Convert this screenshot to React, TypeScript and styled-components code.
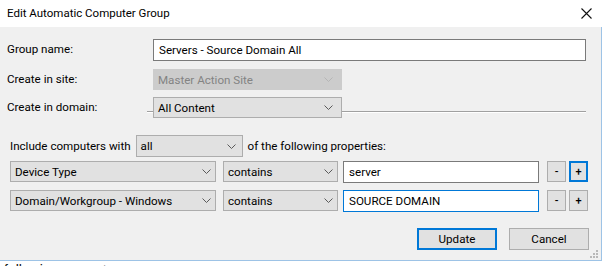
import styled, { createGlobalStyle } from 'styled-components';

// Edit Automatic Computer Group dialog

const GlobalStyle = createGlobalStyle`
  html, body {
    margin: 0;
    padding: 0;
    background: #ffffff;
  }
  body {
    font-family: Roboto, 'Noto Sans', sans-serif;
    font-size: 11.6px;
    color: #000;
  }
`;

const Chevron = ({ muted }: { muted?: boolean }) => (
  <svg width="9" height="5" viewBox="0 0 9 5">
    <polyline
      points="0.5,0.5 4.5,4.5 8.5,0.5"
      fill="none"
      stroke={muted ? '#b5b5b5' : '#5a5a5a'}
      strokeWidth="1"
    />
  </svg>
);

const CloseIcon = () => (
  <svg width="11" height="11" viewBox="0 0 11 11">
    <path d="M0.5 0.5 L10.5 10.5 M10.5 0.5 L0.5 10.5" stroke="#111" strokeWidth="1.1" />
  </svg>
);

const Select = ({
  value,
  width,
  disabled,
  chevronRight = 8,
}: {
  value: string;
  width: number;
  disabled?: boolean;
  chevronRight?: number;
}) => (
  <SelectBox $width={width} $disabled={disabled} $chevronRight={chevronRight}>
    <span>{value}</span>
    <Chevron muted={disabled} />
  </SelectBox>
);

export default function App() {
  return (
    <>
      <GlobalStyle />
      <Window>
        <TitleBar>
          <Title>Edit Automatic Computer Group</Title>
          <CloseButton>
            <CloseIcon />
          </CloseButton>
        </TitleBar>

        <Body>
          <FieldRow $top={12}>
            <Label>Group name:</Label>
            <TextInput $width={433}>Servers - Source Domain All</TextInput>
          </FieldRow>

          <FieldRow $top={8}>
            <Label>Create in site:</Label>
            <Select value="Master Action Site" width={189} disabled chevronRight={12} />
          </FieldRow>

          <FieldRow $top={7}>
            <Label $width={140}>Create in domain:</Label>
            <Rule $width={6} />
            <Select value="All Content" width={189} chevronRight={12} />
            <Rule />
          </FieldRow>

          <Criteria>
            <IncludeRow>
              <span>Include computers with</span>
              <Select value="all" width={107} chevronRight={10} />
              <span>of the following properties:</span>
            </IncludeRow>

            <PropertyRow $top={4}>
              <Select value="Device Type" width={206} />
              <Select value="contains" width={115} />
              <TextInput $width={196}>server</TextInput>
              <SmallButtons>
                <SmallButton>-</SmallButton>
                <SmallButton $focused>+</SmallButton>
              </SmallButtons>
            </PropertyRow>

            <PropertyRow $top={7}>
              <Select value="Domain/Workgroup - Windows" width={206} />
              <Select value="contains" width={115} />
              <TextInput $width={196} $focused>SOURCE DOMAIN</TextInput>
              <SmallButtons>
                <SmallButton>-</SmallButton>
                <SmallButton>+</SmallButton>
              </SmallButtons>
            </PropertyRow>
          </Criteria>

          <Actions>
            <ActionButton $primary>Update</ActionButton>
            <ActionButton>Cancel</ActionButton>
          </Actions>

          <Grip>
            <svg width="8" height="8" viewBox="0 0 8 8">
              {[
                [6, 0],
                [6, 3],
                [3, 3],
                [6, 6],
                [3, 6],
                [0, 6],
              ].map(([x, y]) => (
                <rect key={`${x}-${y}`} x={x} y={y} width="2" height="2" fill="#b8b8b8" />
              ))}
            </svg>
          </Grip>
        </Body>

        <Behind>
          <span>following property:</span>
        </Behind>
      </Window>
    </>
  );
}

const Window = styled.div`
  width: 602px;
  height: 266px;
  overflow: hidden;
  display: flex;
  flex-direction: column;
`;

const TitleBar = styled.div`
  height: 27px;
  background: #fff;
  display: flex;
  align-items: center;
  justify-content: space-between;
  padding: 0 10px 2px 7px;
  box-sizing: border-box;
`;

const Title = styled.div`
  font-size: 11.5px;
  color: #000;
`;

const CloseButton = styled.div`
  display: flex;
  align-items: center;
  margin-top: 1px;
`;

const Body = styled.div`
  position: relative;
  height: 234px;
  background: #f0f0f0;
  border-right: 1px solid #9dc3e6;
  border-bottom: 1px solid #9dc3e6;
  box-sizing: border-box;
  padding-left: 7px;
  display: flex;
  flex-direction: column;
`;

const FieldRow = styled.div<{ $top: number }>`
  margin-top: ${(p) => p.$top}px;
  display: flex;
  align-items: flex-start;
`;

const Label = styled.div<{ $width?: number }>`
  width: ${(p) => p.$width ?? 146}px;
  height: 21px;
  line-height: 21px;
  flex-shrink: 0;
`;

const Rule = styled.div<{ $width?: number }>`
  margin-top: 14px;
  height: 0;
  border-top: 1px solid #a0a0a0;
  border-bottom: 1px solid #ffffff;
  width: ${(p) => (p.$width ? `${p.$width}px` : 'auto')};
  flex: ${(p) => (p.$width ? '0 0 auto' : '0 0 244px')};
`;

const TextInput = styled.div<{ $width: number; $focused?: boolean }>`
  width: ${(p) => p.$width}px;
  height: 22px;
  box-sizing: border-box;
  border: 1px solid ${(p) => (p.$focused ? '#0078d7' : '#7a7a7a')};
  background: #fff;
  padding-left: 5px;
  line-height: 20px;
  white-space: nowrap;
  overflow: hidden;
`;

const SelectBox = styled.div<{ $width: number; $disabled?: boolean; $chevronRight: number }>`
  width: ${(p) => p.$width}px;
  height: 21px;
  box-sizing: border-box;
  border: 1px solid ${(p) => (p.$disabled ? '#cccccc' : '#adadad')};
  background: ${(p) => (p.$disabled ? '#cccccc' : '#e1e1e1')};
  color: ${(p) => (p.$disabled ? '#838383' : '#000')};
  display: flex;
  align-items: center;
  justify-content: space-between;
  padding: 0 ${(p) => p.$chevronRight - 4}px 0 4px;
  flex-shrink: 0;
  white-space: nowrap;

  svg {
    flex-shrink: 0;
  }
`;

const Criteria = styled.div`
  margin-top: 17px;
  padding-left: 3px;
  display: flex;
  flex-direction: column;
`;

const IncludeRow = styled.div`
  display: flex;
  align-items: center;
  gap: 5px;
  height: 22px;
  white-space: nowrap;

  & > div {
    height: 22px;
  }
`;

const PropertyRow = styled.div<{ $top: number }>`
  margin-top: ${(p) => p.$top}px;
  display: flex;
  align-items: flex-start;
  gap: 7px;

  & > div:nth-child(3) {
    margin-left: -2px;
  }
`;

const SmallButtons = styled.div`
  display: flex;
  gap: 3px;
  margin-left: 1px;
`;

const SmallButton = styled.div<{ $focused?: boolean }>`
  width: 19px;
  height: 21px;
  box-sizing: border-box;
  border: 1px solid ${(p) => (p.$focused ? '#0078d7' : '#adadad')};
  box-shadow: ${(p) => (p.$focused ? 'inset 0 0 0 1px #0078d7' : 'none')};
  background: #e1e1e1;
  display: flex;
  align-items: center;
  justify-content: center;
  font-size: 11px;
  font-weight: 500;
  line-height: 1;
`;

const Actions = styled.div`
  margin-top: 16px;
  padding-right: 12px;
  display: flex;
  justify-content: flex-end;
  gap: 12px;
`;

const ActionButton = styled.div<{ $primary?: boolean }>`
  width: 80px;
  height: 22px;
  box-sizing: border-box;
  border: 1px solid ${(p) => (p.$primary ? '#0078d7' : '#adadad')};
  box-shadow: ${(p) => (p.$primary ? 'inset 0 0 0 1px #0078d7' : 'none')};
  background: #e1e1e1;
  display: flex;
  align-items: center;
  justify-content: center;
`;

const Grip = styled.div`
  position: absolute;
  right: 3px;
  bottom: 2px;
  display: flex;
`;

const Behind = styled.div`
  flex: 1;
  background: #fff;
  overflow: hidden;
  padding-left: 4px;

  span {
    display: block;
    margin-top: 1px;
    font-family: 'Liberation Sans', Arial, sans-serif;
    font-size: 14px;
    line-height: 16px;
    color: #111;
  }
`;
